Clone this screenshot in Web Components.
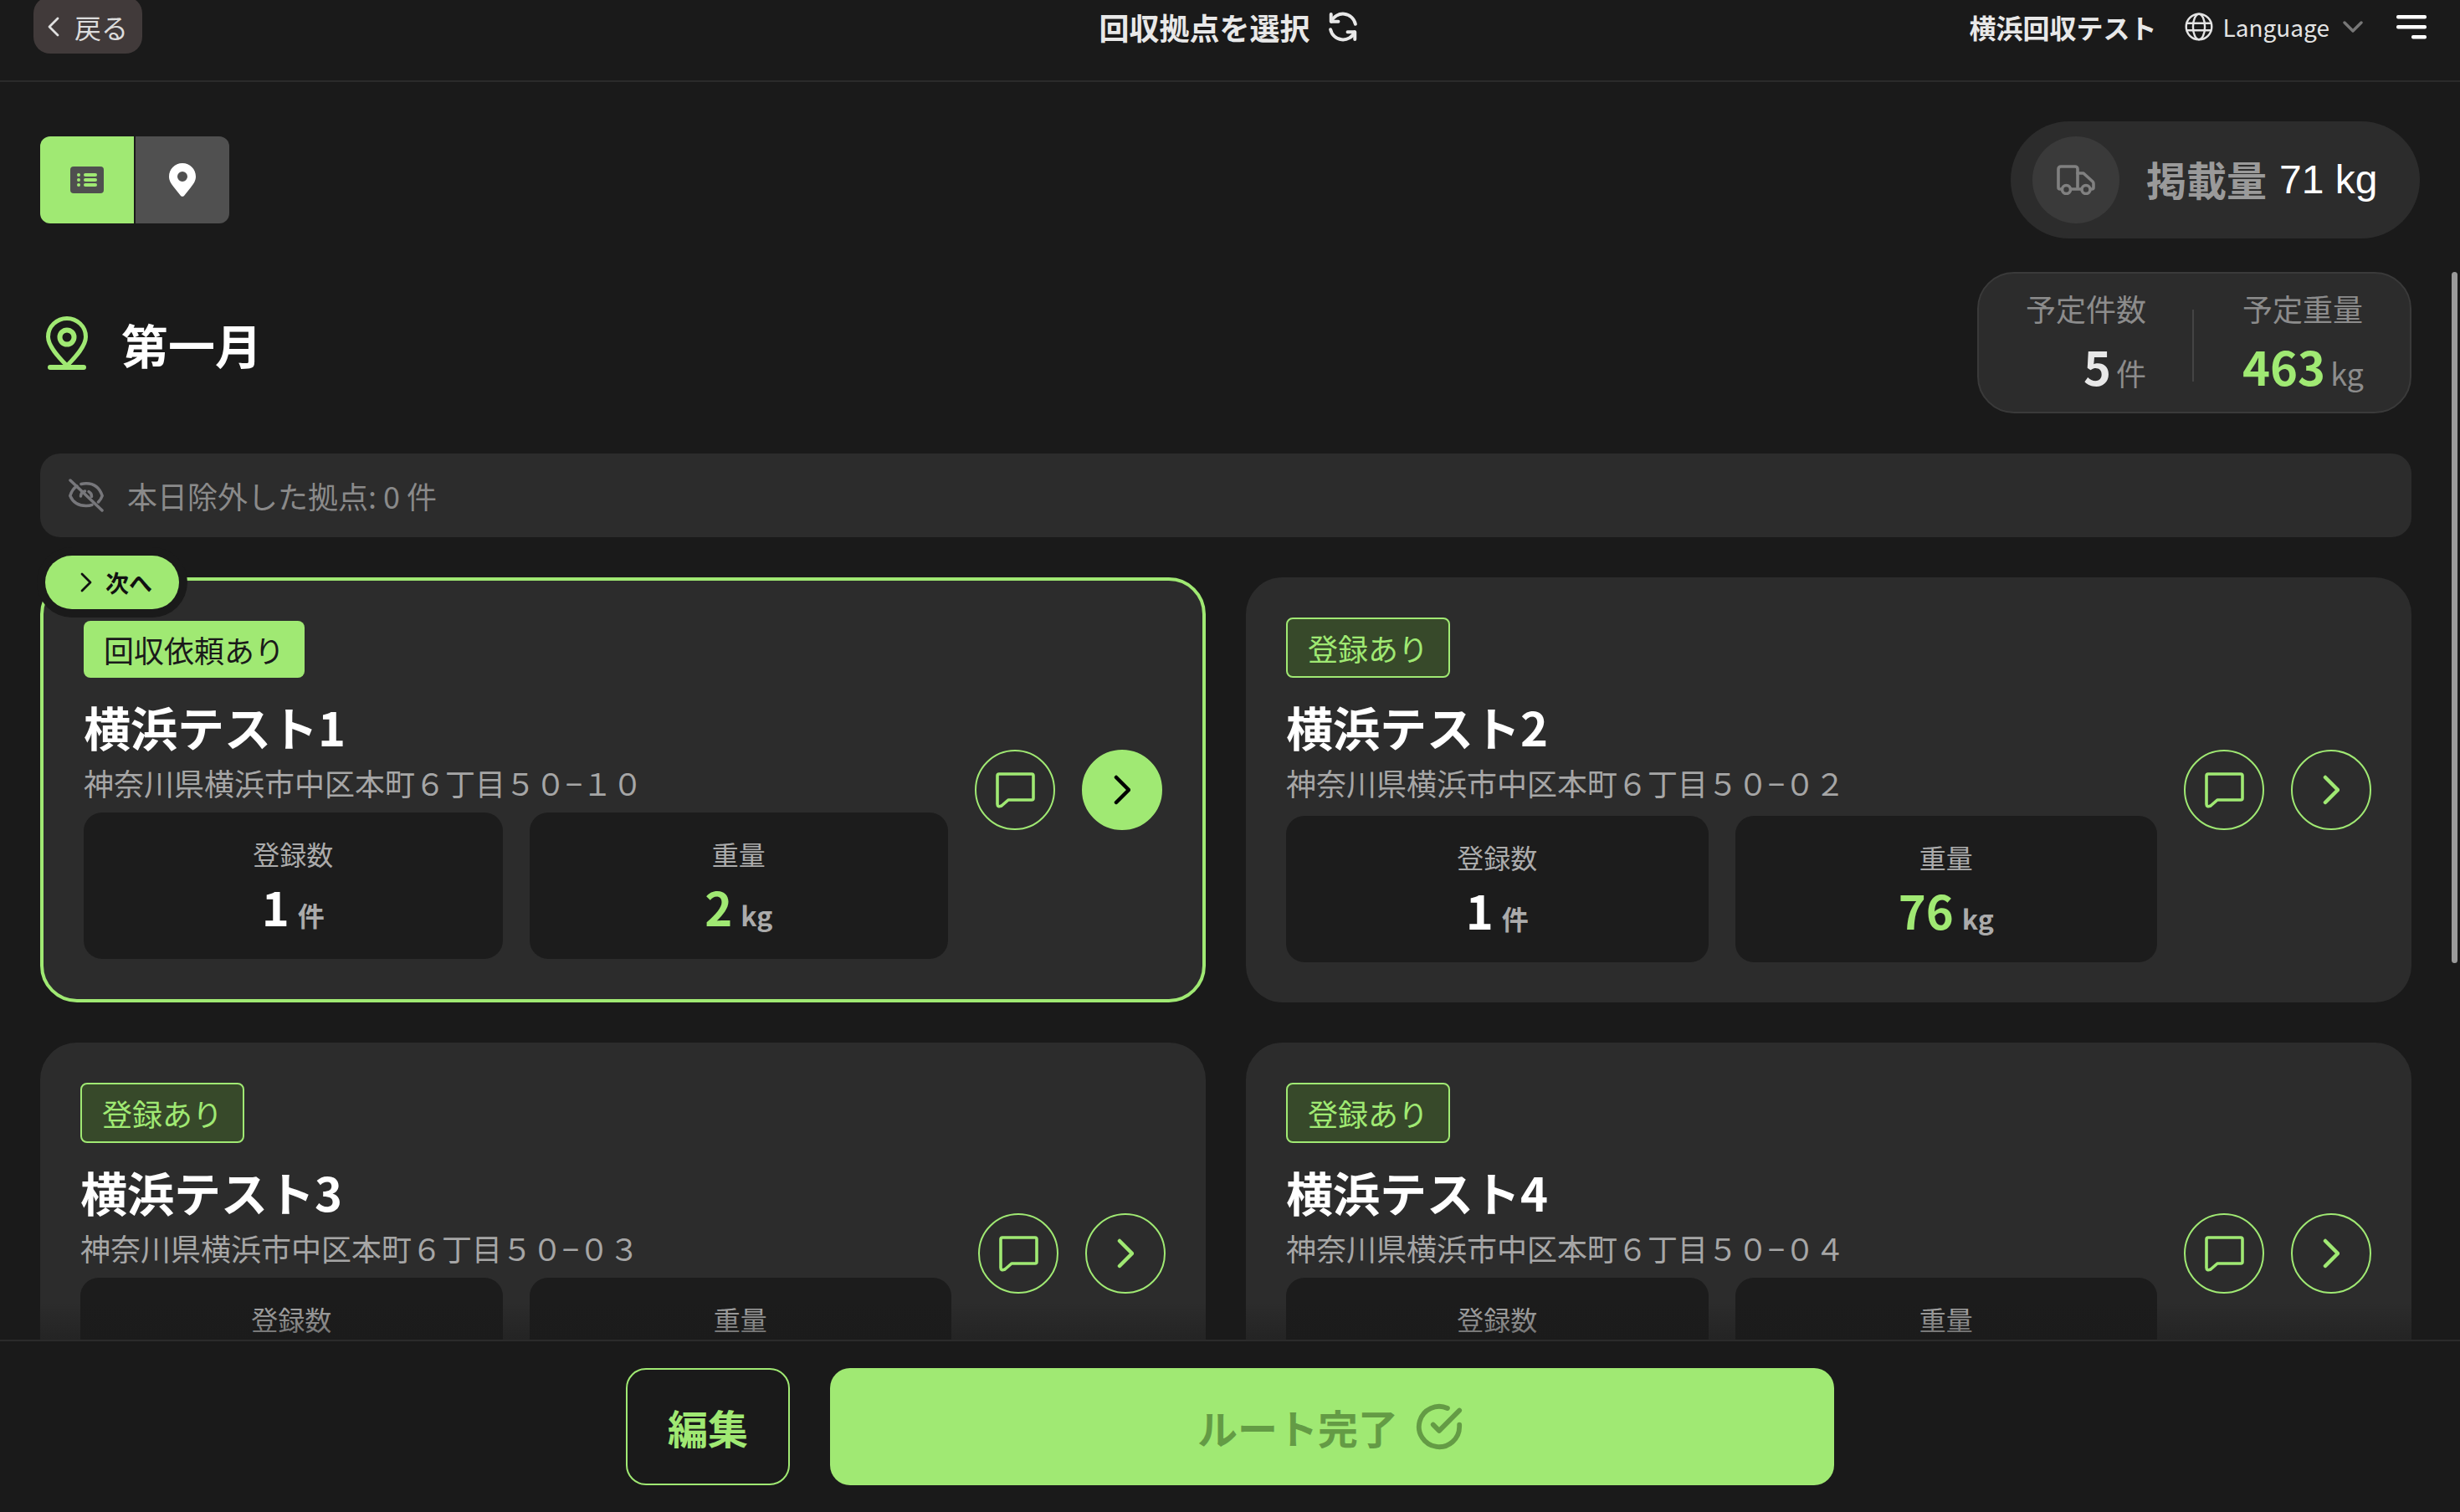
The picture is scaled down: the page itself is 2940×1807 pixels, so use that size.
<!DOCTYPE html>
<html lang="ja">
<head>
<meta charset="utf-8">
<title>回収拠点を選択</title>
<style>
html,body{margin:0;padding:0;height:100%;background:#1a1a1a;overflow:hidden}
body{font-family:"Noto Sans CJK JP","Noto Sans",sans-serif;color:#fff}
</style>
</head>
<body>
<rc-app>
  <rc-header slot="header" user="横浜回収テスト">回収拠点を選択</rc-header>
  <rc-vehicle-bar slot="bar"></rc-vehicle-bar>
  <rc-route-head><span slot="title">第一月</span></rc-route-head>
  <rc-notice>本日除外した拠点: 0 件</rc-notice>
  <rc-card-grid>
    <rc-card featured tag="回収依頼あり" name="横浜テスト1" address="神奈川県横浜市中区本町６丁目５０−１０" count="1" weight="2"></rc-card>
    <rc-card shift tag="登録あり" name="横浜テスト2" address="神奈川県横浜市中区本町６丁目５０−０２" count="1" weight="76"></rc-card>
    <rc-card tag="登録あり" name="横浜テスト3" address="神奈川県横浜市中区本町６丁目５０−０３"></rc-card>
    <rc-card tag="登録あり" name="横浜テスト4" address="神奈川県横浜市中区本町６丁目５０−０４"></rc-card>
  </rc-card-grid>
  <rc-footer slot="footer"></rc-footer>
</rc-app>

<template id="t-app">
  <style>
    :host{display:flex;flex-direction:column;height:1807px;width:2940px;background:#1a1a1a;overflow:hidden}
    .scroll{flex:1;min-height:0;position:relative;overflow:hidden;padding:24px 58px 0 48px;box-sizing:border-box;display:flex;flex-direction:column;gap:48px}
    ::slotted(*){flex:none}
    .thumb{position:absolute;top:24px;right:3px;width:7px;height:826px;border-radius:4px;background:#9a9a9a}
    .fade{position:absolute;left:0;right:0;bottom:0;height:44px;background:linear-gradient(rgba(26,26,26,0),rgba(26,26,26,.45));pointer-events:none}
  </style>
  <slot name="header"></slot>
  <slot name="bar"></slot>
  <div class="scroll"><slot></slot><div class="fade"></div><div class="thumb"></div></div>
  <slot name="footer"></slot>
</template>

<template id="t-header">
  <style>
    :host{display:grid;grid-template-columns:1fr auto 1fr;align-items:center;box-sizing:border-box;height:98px;padding:0 40px 32px;border-bottom:2px solid #2b2b2b;color:#e8e8e8}
    .back{justify-self:start;display:flex;align-items:center;gap:18px;box-sizing:border-box;height:68px;margin-top:-5px;padding:5px 16px 0 17px;width:130px;background:#413a3a;border-radius:20px;font-size:32px;color:#dcdcdc;white-space:nowrap}
    .title{display:flex;align-items:center;gap:20px;margin-left:-3px;font-size:36px;font-weight:700;line-height:48px}
    .right{justify-self:end;display:flex;align-items:center}
    .user{font-size:32px;font-weight:700;line-height:44px;margin-right:33px}
    .lang{font-size:28px;line-height:40px;margin:0 16px 0 12px;color:#e4e4e4}
    svg{display:block;flex:none}
    .menu{margin-left:40px}
  </style>
  <div class="back">
    <svg width="14" height="24" viewBox="0 0 14 24" fill="none" stroke="#e0e0e0" stroke-width="2.8" stroke-linecap="round" stroke-linejoin="round"><path d="M12 2 2 12l10 10"/></svg>
    <span>戻る</span>
  </div>
  <div class="title"><span><slot></slot></span>
    <svg width="38" height="38" viewBox="0 0 24 24" fill="none" stroke="#e8e8e8" stroke-width="2.5" stroke-linecap="round" stroke-linejoin="round"><path d="M3 2.5V8h5.5"/><path d="M3.2 8A9.6 9.6 0 0 1 21.4 10"/><path d="M21 21.5V16h-5.5"/><path d="M20.8 16A9.6 9.6 0 0 1 2.6 14"/></svg>
  </div>
  <div class="right">
    <span class="user" id="user"></span>
    <svg width="34" height="34" viewBox="0 0 24 24" fill="none" stroke="#e4e4e4" stroke-width="1.7"><circle cx="12" cy="12" r="10.8"/><ellipse cx="12" cy="12" rx="5" ry="10.8"/><path d="M1.2 9h21.6M1.2 15h21.6" /></svg>
    <span class="lang">Language</span>
    <svg width="24" height="14" viewBox="0 0 24 14" fill="none" stroke="#777" stroke-width="3.4" stroke-linecap="round" stroke-linejoin="round"><path d="M2 2l10 10L22 2"/></svg>
    <svg class="menu" width="36" height="29" viewBox="0 0 36 29" fill="#fff"><rect width="36" height="4.5" rx="2"/><rect y="12" width="36" height="4.5" rx="2"/><rect x="18" y="24" width="18" height="4.5" rx="2"/></svg>
  </div>
</template>

<template id="t-bar">
  <style>
    :host{display:flex;justify-content:space-between;align-items:center;padding:47px 48px 16px 48px}
    .toggle{display:flex;gap:2px}
    .seg{width:112px;height:104px;display:flex;align-items:center;justify-content:center}
    .a{background:#a0e973;border-radius:12px 0 0 12px}
    .b{background:#505050;border-radius:0 12px 12px 0}
    svg{display:block}
    .pill{display:flex;align-items:center;height:140px;width:489px;box-sizing:border-box;padding:0 0 0 26px;border-radius:70px;background:#2c2c2c}
    .circle{width:104px;height:104px;border-radius:50%;background:#3a3a3a;display:flex;align-items:center;justify-content:center}
    .txt{margin-left:32px;display:flex;align-items:center;gap:15px;font-size:48px;line-height:64px;font-weight:700;color:#9a9a9a;white-space:nowrap}
    .lbl{margin-top:-5px}
    .num{font-family:"Liberation Sans",sans-serif;font-weight:400;color:#fff;margin-top:-1px}
  </style>
  <div class="toggle">
    <div class="seg a"><svg width="40" height="32" viewBox="0 0 40 32"><rect width="40" height="32" rx="4" fill="#4f4f4f"/><g fill="#a0e973"><circle cx="10" cy="10" r="2"/><circle cx="10" cy="16" r="2"/><circle cx="10" cy="22" r="2"/><rect x="16" y="8" width="16" height="4" rx="2"/><rect x="16" y="14" width="16" height="4" rx="2"/><rect x="16" y="20" width="16" height="4" rx="2"/></g></svg></div>
    <div class="seg b"><svg width="32" height="40" viewBox="0 0 32 40"><path fill="#fff" fill-rule="evenodd" d="M16 0C7 0 0 7 0 16c0 5 2.500 8.500 6 13l8 10q2 1.700 4 0l8-10c3.500-4.500 6-8 6-13C32 7 25 0 16 0Zm0 10a6 6 0 1 1 0 12 6 6 0 0 1 0-12Z"/></svg></div>
  </div>
  <div class="pill">
    <div class="circle"><svg width="46" height="36" viewBox="0 0 46 36" fill="none" stroke="#808080" stroke-width="3.600" stroke-linecap="round" stroke-linejoin="round"><path d="M6 29H4a2 2 0 0 1-2-2V5a3 3 0 0 1 3-3h17a3 3 0 0 1 3 3v22"/><path d="M25 10h7l11 10q1 1 1 2.500V27a2 2 0 0 1-2 2h-1"/><path d="M17 29h12"/><circle cx="11.500" cy="29.500" r="5"/><circle cx="35" cy="29.500" r="5"/></svg></div>
    <div class="txt"><span class="lbl">掲載量</span><span class="num">71 kg</span></div>
  </div>
</template>

<template id="t-head">
  <style>
    :host{display:flex;align-items:center;justify-content:space-between;height:169px}
    .left{display:flex;align-items:center;padding-left:7px}
    svg{display:block}
    .title{margin-left:40px;margin-top:2px;font-size:56px;line-height:70px;font-weight:700;color:#fff}
    .panel{box-sizing:border-box;width:519px;height:169px;border:2px solid #3a3a3a;border-radius:44px;background:#2c2c2c;display:flex;align-items:center;justify-content:space-between;padding:6px 56px 0}
    .col{width:144px;text-align:right}
    .label{font-size:36px;line-height:48px;color:#8c8c8c}
    .val{margin-top:9px;font-size:56px;line-height:72px;font-weight:700;color:#e8e8e8;white-space:nowrap}
    .val.g{color:#a0e973}
    .val small{font-size:36px;font-weight:400;color:#8c8c8c;margin-left:6px}
    .div{width:2px;height:86px;background:#444;margin-right:4px}
  </style>
  <div class="left">
    <svg width="50" height="64" viewBox="0 0 50 64" fill="none" stroke="#a0e973" stroke-linecap="round" stroke-linejoin="round"><path stroke-width="5" d="M25 2.500C13 2.500 2.500 12 2.500 24.500c0 11 12 24 22.500 34.500C35.500 48.500 47.500 35.500 47.500 24.500 47.500 12 37 2.500 25 2.500Z"/><circle cx="25" cy="25" r="8.500" stroke-width="6"/><path stroke-width="6" d="M5 61h40"/></svg>
    <span class="title"><slot name="title"></slot></span>
  </div>
  <div class="panel">
    <div class="col"><div class="label">予定件数</div><div class="val">5<small>件</small></div></div>
    <div class="div"></div>
    <div class="col"><div class="label">予定重量</div><div class="val g">463<small>kg</small></div></div>
  </div>
</template>

<template id="t-notice">
  <style>
    :host{display:flex;align-items:center;height:100px;padding-left:34px;border-radius:24px;background:#2c2c2c;color:#8a8a8a;font-size:36px;line-height:48px}
    svg{display:block;margin-right:28px}
  </style>
  <svg width="42" height="40" viewBox="0 0 42 40" fill="none" stroke="#77777b" stroke-width="3.500" stroke-linecap="round" stroke-linejoin="round"><path d="M10 9C6.500 11 3.500 15 1.800 20.500 5 28 12 32.500 21 32.500c2.500 0 5-.4 7-1.200"/><path d="M15 6.500c2-.5 4-.8 6-.8 9 0 16 5 19.200 14.800-1 3-2.700 5.500-4.700 7.500"/><path d="M14.500 21a6.500 6.500 0 0 1 5-6"/><path d="M24 15.500a6.500 6.500 0 0 1 3.500 6"/><path d="M2 2l38 36"/></svg>
  <span><slot></slot></span>
</template>

<template id="t-grid">
  <style>:host{display:grid;grid-template-columns:1fr 1fr;gap:48px;align-items:start}</style>
  <slot></slot>
</template>

<template id="t-stat">
  <style>
    :host{flex:1;min-width:0;display:flex;flex-direction:column;align-items:center;justify-content:flex-start;box-sizing:border-box;height:175px;padding-top:26px;border-radius:22px;background:#1c1c1c}
    .label{font-size:32px;line-height:46px;color:#ababab}
    .val{margin-top:4px;font-size:56px;line-height:72px;font-weight:700;color:var(--val,#fff);white-space:nowrap}
    .unit{font-size:32px;font-weight:700;color:#ababab;margin-left:10px}
  </style>
  <div class="label" id="label"></div>
  <div class="val"><span id="val"></span><span class="unit" id="unit"></span></div>
</template>

<template id="t-circle">
  <style>
    :host{flex:none;display:flex;align-items:center;justify-content:center;box-sizing:border-box;width:96px;height:96px;border-radius:50%;border:2.5px solid #a0e973}
    :host([solid]){background:#a0e973}
    svg{display:block}
  </style>
  <slot></slot>
</template>

<template id="t-card">
  <style>
    :host{display:flex;align-items:center;gap:32px;position:relative;box-sizing:border-box;padding:48px;border-radius:44px;background:#2c2c2c}
    :host([featured]){border:4px solid #a0e973}
    .main{flex:1;min-width:0}
    .tag{display:inline-flex;align-items:center;vertical-align:top;box-sizing:border-box;height:72px;padding:0 24px;border:2px solid #a0e973;border-radius:8px;background:#37492a;color:#a0e973;font-size:36px}
    :host([featured]) .tag{height:68px;border:0;background:#a0e973;color:#1a1a1a}
    .tagrow{display:block;line-height:0}
    .name{margin-top:22px;font-size:56px;line-height:72px;font-weight:700;color:#fff}
    .addr{margin-top:7px;font-size:36px;line-height:48px;color:#a6a6a6;white-space:nowrap}
    .stats{display:flex;gap:32px;margin-top:12px}
    :host([shift]) .stats{margin-top:16px}
    .actions{display:flex;gap:32px}
    .next{position:absolute;left:2px;top:-30px;display:none;align-items:center;gap:16px;box-sizing:border-box;width:160px;height:64px;padding-left:42px;border-radius:32px;background:#a0e973;color:#111;font-size:28px;font-weight:700;line-height:36px;box-shadow:0 0 0 10px #1a1a1a}
    :host([featured]) .next{display:flex}
    svg{display:block}
  </style>
  <div class="next">
    <svg width="14" height="24" viewBox="0 0 14 24" fill="none" stroke="#111" stroke-width="2.800" stroke-linecap="round" stroke-linejoin="round"><path d="M2 2l10 10L2 22"/></svg>
    <span>次へ</span>
  </div>
  <div class="main">
    <div class="tagrow"><span class="tag" id="tag"></span></div>
    <div class="name" id="name"></div>
    <div class="addr" id="addr"></div>
    <div class="stats" id="stats"></div>
  </div>
  <div class="actions" id="actions">
    <rc-circle><svg width="47" height="43" viewBox="0 0 47 43" fill="none" stroke="#a0e973" stroke-width="3.600" stroke-linejoin="round"><path d="M4 2h39a2 2 0 0 1 2 2v27a2 2 0 0 1-2 2H15l-8 7q-5 2-5-2V4a2 2 0 0 1 2-2Z"/></svg></rc-circle>
    <rc-circle id="go"><svg width="20" height="36" viewBox="0 0 20 36" fill="none" stroke="#a0e973" stroke-width="4.500" stroke-linecap="round" stroke-linejoin="round" id="chev"><path d="M3 3l15 15L3 33"/></svg></rc-circle>
  </div>
</template>

<template id="t-footer">
  <style>
    :host{display:flex;justify-content:center;align-items:flex-start;gap:48px;box-sizing:border-box;height:206px;padding-top:32px;border-top:2px solid #2b2b2b;background:#1a1a1a;position:relative}
    .edit{box-sizing:border-box;width:196px;height:140px;border:2.500px solid #a0e973;border-radius:24px;display:flex;align-items:center;justify-content:center;font-size:48px;font-weight:700;color:#a0e973}
    .done{width:1200px;height:140px;border-radius:24px;background:#a0e973;display:flex;align-items:center;justify-content:center;gap:20px;font-size:48px;font-weight:700;color:#649b45;padding-right:4px;box-sizing:border-box}
    svg{display:block}
  </style>
  <div class="edit">編集</div>
  <div class="done"><span>ルート完了</span>
    <svg width="58" height="58" viewBox="0 0 24 24" fill="none" stroke="#649b45" stroke-width="2.400" stroke-linecap="round" stroke-linejoin="round"><path d="M22 11v1a10 10 0 1 1-5.900-9.100"/><path d="M22 4 12 14l-3-3"/></svg>
  </div>
</template>

<script>
function mount(el,id){
  var root=el.shadowRoot||el.attachShadow({mode:'open'});
  root.appendChild(document.getElementById(id).content.cloneNode(true));
  return root;
}
class RcApp extends HTMLElement{constructor(){super();mount(this,'t-app');}}
class RcHeader extends HTMLElement{
  constructor(){super();this.r=mount(this,'t-header');}
  connectedCallback(){this.r.getElementById('user').textContent=this.getAttribute('user')||'';}
}
class RcVehicleBar extends HTMLElement{constructor(){super();mount(this,'t-bar');}}
class RcRouteHead extends HTMLElement{constructor(){super();mount(this,'t-head');}}
class RcNotice extends HTMLElement{constructor(){super();mount(this,'t-notice');}}
class RcCardGrid extends HTMLElement{constructor(){super();mount(this,'t-grid');}}
class RcCircle extends HTMLElement{constructor(){super();mount(this,'t-circle');}}
class RcStat extends HTMLElement{
  constructor(){super();this.r=mount(this,'t-stat');}
  connectedCallback(){
    var v=this.getAttribute('value');
    this.r.getElementById('label').textContent=this.getAttribute('label');
    if(v){
      this.r.getElementById('val').textContent=v;
      this.r.getElementById('unit').textContent=this.getAttribute('unit');
    }
  }
}
class RcCard extends HTMLElement{
  constructor(){super();this.r=mount(this,'t-card');}
  connectedCallback(){
    var r=this.r,g=this.getAttribute.bind(this);
    r.getElementById('tag').textContent=g('tag');
    r.getElementById('name').textContent=g('name');
    r.getElementById('addr').textContent=g('address');
    var stats=r.getElementById('stats');
    var a=document.createElement('rc-stat');
    a.setAttribute('label','登録数');a.setAttribute('unit','件');
    if(g('count'))a.setAttribute('value',g('count'));
    var b=document.createElement('rc-stat');
    b.setAttribute('label','重量');b.setAttribute('unit','kg');
    if(g('weight'))b.setAttribute('value',g('weight'));
    b.style.setProperty('--val','#a0e973');
    stats.append(a,b);
    if(this.hasAttribute('featured')){
      r.getElementById('go').setAttribute('solid','');
      r.getElementById('chev').setAttribute('stroke','#000');
    }
  }
}
class RcFooter extends HTMLElement{constructor(){super();mount(this,'t-footer');}}
customElements.define('rc-circle',RcCircle);
customElements.define('rc-stat',RcStat);
customElements.define('rc-header',RcHeader);
customElements.define('rc-vehicle-bar',RcVehicleBar);
customElements.define('rc-route-head',RcRouteHead);
customElements.define('rc-notice',RcNotice);
customElements.define('rc-card-grid',RcCardGrid);
customElements.define('rc-card',RcCard);
customElements.define('rc-footer',RcFooter);
customElements.define('rc-app',RcApp);
</script>
</body>
</html>
